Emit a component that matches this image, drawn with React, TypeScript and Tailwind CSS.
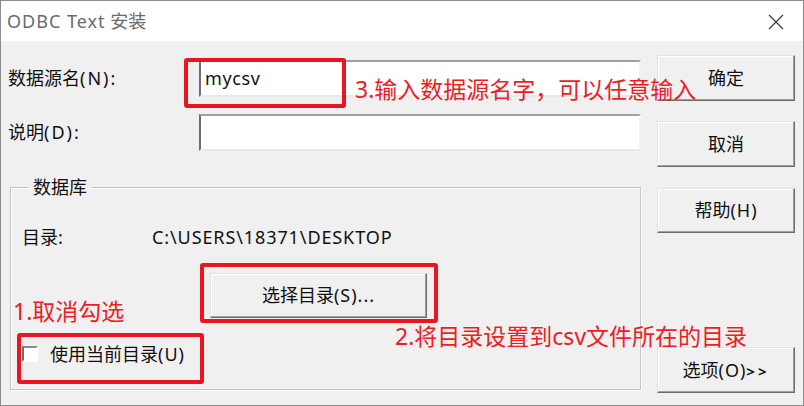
const font = "font-['Noto_Sans','Noto_Sans_CJK_SC',sans-serif]";

function WinButton({ label, className = '' }: { label: React.ReactNode; className?: string }) {
  return (
    <div
      className={`flex items-center justify-center bg-[#f0f0f0] border border-t-[#e3e3e3] border-l-[#e3e3e3] border-r-[#6b6b6b] border-b-[#6b6b6b] shadow-[inset_-1px_-1px_0_#a0a0a0,inset_1px_1px_0_#ffffff] text-[18px] text-[#111] ${className}`}
    >
      {label}
    </div>
  );
}

function TextBox({ value = '' }: { value?: string }) {
  return (
    <div className="flex items-center w-[442px] bg-white border-2 border-t-[#a0a0a0] border-l-[#6e6e6e] border-r-[#f3f3f3] border-b-[#e8e8e8] pl-[4px] text-[18px] tracking-[0.6px] text-[#111] h-[37px]">
      {value}
    </div>
  );
}

function RedBox({ className }: { className: string }) {
  return <div className={`absolute border-4 border-[#ec1420] rounded-[3px] pointer-events-none ${className}`} />;
}

function Note({ text, className }: { text: string; className: string }) {
  return (
    <div className={`absolute whitespace-nowrap text-[23px] leading-[26px] text-[#ee1c25] ${className}`}>{text}</div>
  );
}

export default function App() {
  return (
    <div className={`relative w-[804px] h-[406px] bg-[#f0f0f0] border border-[#8c8c8c] overflow-hidden ${font}`}>
      {/* title bar */}
      <div className="flex items-center justify-between h-[40px] bg-white pl-[6px] pr-[19px]">
        <span className="text-[18px] text-[#6b6b6b]">
          <span className="tracking-[1px]">ODBC Text</span> 安装
        </span>
        <svg width="16" height="16" viewBox="0 0 16 16" className="mt-[2px]">
          <path d="M1 1 L15 15 M15 1 L1 15" stroke="#3a3a3a" strokeWidth="1.2" fill="none" />
        </svg>
      </div>

      <div className="flex">
        {/* left column */}
        <div className="w-[640px] pl-[7px] text-[18px] text-[#111]">
          <div className="flex items-center mt-[19px]">
            <span className="w-[191px]">
              数据源名<span className="tracking-[2px]">(N):</span>
            </span>
            <TextBox value="mycsv" />
          </div>
          <div className="flex items-center mt-[17px]">
            <span className="w-[191px]">
              说明<span className="tracking-[2px]">(D):</span>
            </span>
            <TextBox />
          </div>

          <fieldset className="ml-[2px] mt-[23px] mr-0 border border-[#c4c4c4] shadow-[inset_1px_1px_0_#ffffff,1px_1px_0_#ffffff] pl-[11px] pb-[21px] h-[216px]">
            <legend className="ml-[7px] px-[4px] leading-[26px]">数据库</legend>
            <div className="flex items-center h-[26px] mt-[24px]">
              <span className="w-[130px]">目录:</span>
              <span className="tracking-[0.9px]">C:\USERS\18371\DESKTOP</span>
            </div>
            <WinButton
              label={
                <span>
                  选择目录<span className="tracking-[1px]">(S)...</span>
                </span>
              }
              className="ml-[188px] mt-[23px] w-[217px] h-[45px]"
            />
            <div className="flex items-center h-[26px] mt-[23px]">
              <div className="w-[16px] h-[16px] bg-white border-2 border-t-[#8a8a8a] border-l-[#6e6e6e] border-r-white border-b-white" />
              <span className="ml-[12px]">
                使用当前目录<span className="tracking-[1px]">(U)</span>
              </span>
            </div>
          </fieldset>
        </div>

        {/* right column */}
        <div className="flex flex-col ml-[16px] w-[138px]">
          <WinButton label="确定" className="mt-[14px] h-[46px]" />
          <WinButton label="取消" className="mt-[20px] h-[46px]" />
          <WinButton
            label={
              <span>
                帮助<span className="tracking-[1px]">(H)</span>
              </span>
            }
            className="mt-[21px] h-[45px]"
          />
          <WinButton
            label={
              <span>
                选项<span className="tracking-[1px]">(O)</span>
                <span className="text-[15px] font-bold tracking-[3px]">&gt;&gt;</span>
              </span>
            }
            className="mt-[114px] h-[46px]"
          />
        </div>
      </div>

      {/* annotations */}
      <RedBox className="left-[183px] top-[57px] w-[162px] h-[50px]" />
      <RedBox className="left-[199px] top-[262px] w-[238px] h-[60px]" />
      <RedBox className="left-[16px] top-[332px] w-[187px] h-[51px]" />
      <Note text="3.输入数据源名字，可以任意输入" className="left-[354px] top-[75px]" />
      <Note text="1.取消勾选" className="left-[12px] top-[297px]" />
      <Note text="2.将目录设置到csv文件所在的目录" className="left-[394px] top-[322px]" />
    </div>
  );
}
